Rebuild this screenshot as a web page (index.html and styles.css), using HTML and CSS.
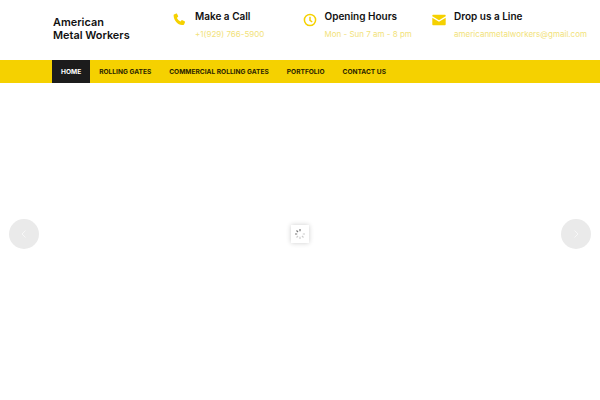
FILE: index.html
```html
<!DOCTYPE html>
<html lang="en">
<head>
    <meta charset="UTF-8">
    <meta name="viewport" content="width=device-width, initial-scale=1.0">
    <title>American Metal Workers</title>
    <link rel="stylesheet" href="styles.css">
</head>
<body>
    <header class="top-header">
        <div class="logo">American<br>Metal Workers</div>
        <div class="contact-list">
            <div class="contact-item">
                <svg class="contact-icon" viewBox="0 0 14 14" width="14" height="14">
                    <path d="M1 1.600 3.200.6c.4-.2.7 0 .9.3l1 2.200c.2.400.1.700-.2.900l-1 .8c.6 1.600 2 3 3.600 3.700l.9-1.100c.3-.3.600-.4 1-.2l2.200 1.100c.4.200.5.500.4.900l-.8 2.100c-.2.400-.5.600-.9.600C5.500 12.900.7 8 .6 2.300c0-.3.100-.6.400-.7z"/>
                </svg>
                <div class="contact-text">
                    <div class="contact-title">Make a Call</div>
                    <div class="contact-detail">+1(929) 766-5900</div>
                </div>
            </div>
            <div class="contact-item">
                <svg class="contact-icon" viewBox="0 0 14 14" width="14" height="14">
                    <circle class="clock-ring" cx="7" cy="7" r="5.600"/>
                    <path class="clock-hand" d="M7 3.800V7.300L9.200 9"/>
                </svg>
                <div class="contact-text">
                    <div class="contact-title">Opening Hours</div>
                    <div class="contact-detail">Mon - Sun 7 am - 8 pm</div>
                </div>
            </div>
            <div class="contact-item">
                <svg class="contact-icon" viewBox="0 0 14 14" width="14" height="14">
                    <path d="M1.300 1.800h11.400c.6 0 1 .4 1 1v.4L7 7.300.3 3.200v-.4c0-.6.400-1 1-1z"/>
                    <path d="M.3 4.700 7 8.800l6.700-4.100v6.500c0 .6-.4 1-1 1H1.300c-.6 0-1-.4-1-1z"/>
                </svg>
                <div class="contact-text">
                    <div class="contact-title">Drop us a Line</div>
                    <div class="contact-detail">americanmetalworkers@gmail.com</div>
                </div>
            </div>
        </div>
    </header>

    <nav class="main-nav">
        <ul class="nav-list">
            <li class="nav-link active">HOME</li>
            <li class="nav-link">ROLLING GATES</li>
            <li class="nav-link">COMMERCIAL ROLLING GATES</li>
            <li class="nav-link">PORTFOLIO</li>
            <li class="nav-link">CONTACT US</li>
        </ul>
    </nav>

    <section class="slider">
        <button class="slider-arrow" aria-label="Previous">
            <svg viewBox="0 0 10 10" width="10" height="10"><path d="M6.500 1.500 3 5l3.500 3.500"/></svg>
        </button>
        <div class="loader">
            <svg viewBox="0 0 12 12" width="12" height="12">
                <path class="spoke-dark" d="M6 1v2.200M2.500 2.500 4 4M1 6h2.200"/>
                <path class="spoke-light" d="M2.500 9.500 4 8M6 8.800V11M8 8l1.500 1.500M8.800 6H11"/>
            </svg>
        </div>
        <button class="slider-arrow" aria-label="Next">
            <svg viewBox="0 0 10 10" width="10" height="10"><path d="M3.500 1.500 7 5 3.500 8.500"/></svg>
        </button>
    </section>
</body>
</html>
```

FILE: styles.css
```css
/* Basic Reset */
* {
    margin: 0;
    padding: 0;
    box-sizing: border-box;
}

body {
    font-family: 'Inter', 'Liberation Sans', sans-serif;
    background-color: #FFFFFF;
    color: #111;
    height: 400px;
    overflow: hidden;
}

.top-header {
    display: flex;
    height: 60px;
    padding-left: 53px;
}

.logo {
    width: 120px;
    padding-top: 16px;
    font-size: 10.900px;
    font-weight: 600;
    line-height: 13px;
}

.contact-list {
    display: flex;
}

.contact-item {
    display: flex;
    width: 129.500px;
    padding-top: 10px;
}

.contact-icon {
    margin: 3px 8px 0 0;
    fill: #F5D100;
    flex-shrink: 0;
}

.clock-ring,
.clock-hand {
    fill: none;
    stroke: #F5D100;
    stroke-width: 1.500;
}

.contact-title {
    font-size: 10px;
    font-weight: 600;
    line-height: 12px;
    white-space: nowrap;
}

.contact-detail {
    margin-top: 7px;
    font-size: 8px;
    line-height: 11px;
    color: #F2E27A;
    white-space: nowrap;
}

.main-nav {
    height: 23px;
    background-color: #F5D100;
    padding-left: 52px;
}

.nav-list {
    display: flex;
    list-style: none;
    height: 100%;
}

.nav-link {
    display: flex;
    align-items: center;
    padding: 0 9px;
    font-size: 6.600px;
    font-weight: 700;
    color: #2A2400;
    white-space: nowrap;
}

.nav-link.active {
    background-color: #1C1C1C;
    color: #FFFFFF;
}

.slider {
    display: flex;
    align-items: center;
    justify-content: space-between;
    height: 302px;
    padding: 0 9px;
}

.slider-arrow {
    display: flex;
    align-items: center;
    justify-content: center;
    width: 30px;
    height: 30px;
    border: none;
    border-radius: 50%;
    background-color: #EAEAEA;
}

.slider-arrow path {
    fill: none;
    stroke: #F7F7F7;
    stroke-width: 1;
}

.loader {
    display: flex;
    align-items: center;
    justify-content: center;
    width: 18px;
    height: 18px;
    background-color: #FFFFFF;
    box-shadow: 0 0 5px rgba(0, 0, 0, 0.2);
}

.spoke-dark,
.spoke-light {
    fill: none;
    stroke-width: 1.200;
}

.spoke-dark {
    stroke: #777;
}

.spoke-light {
    stroke: #CCC;
}
```
